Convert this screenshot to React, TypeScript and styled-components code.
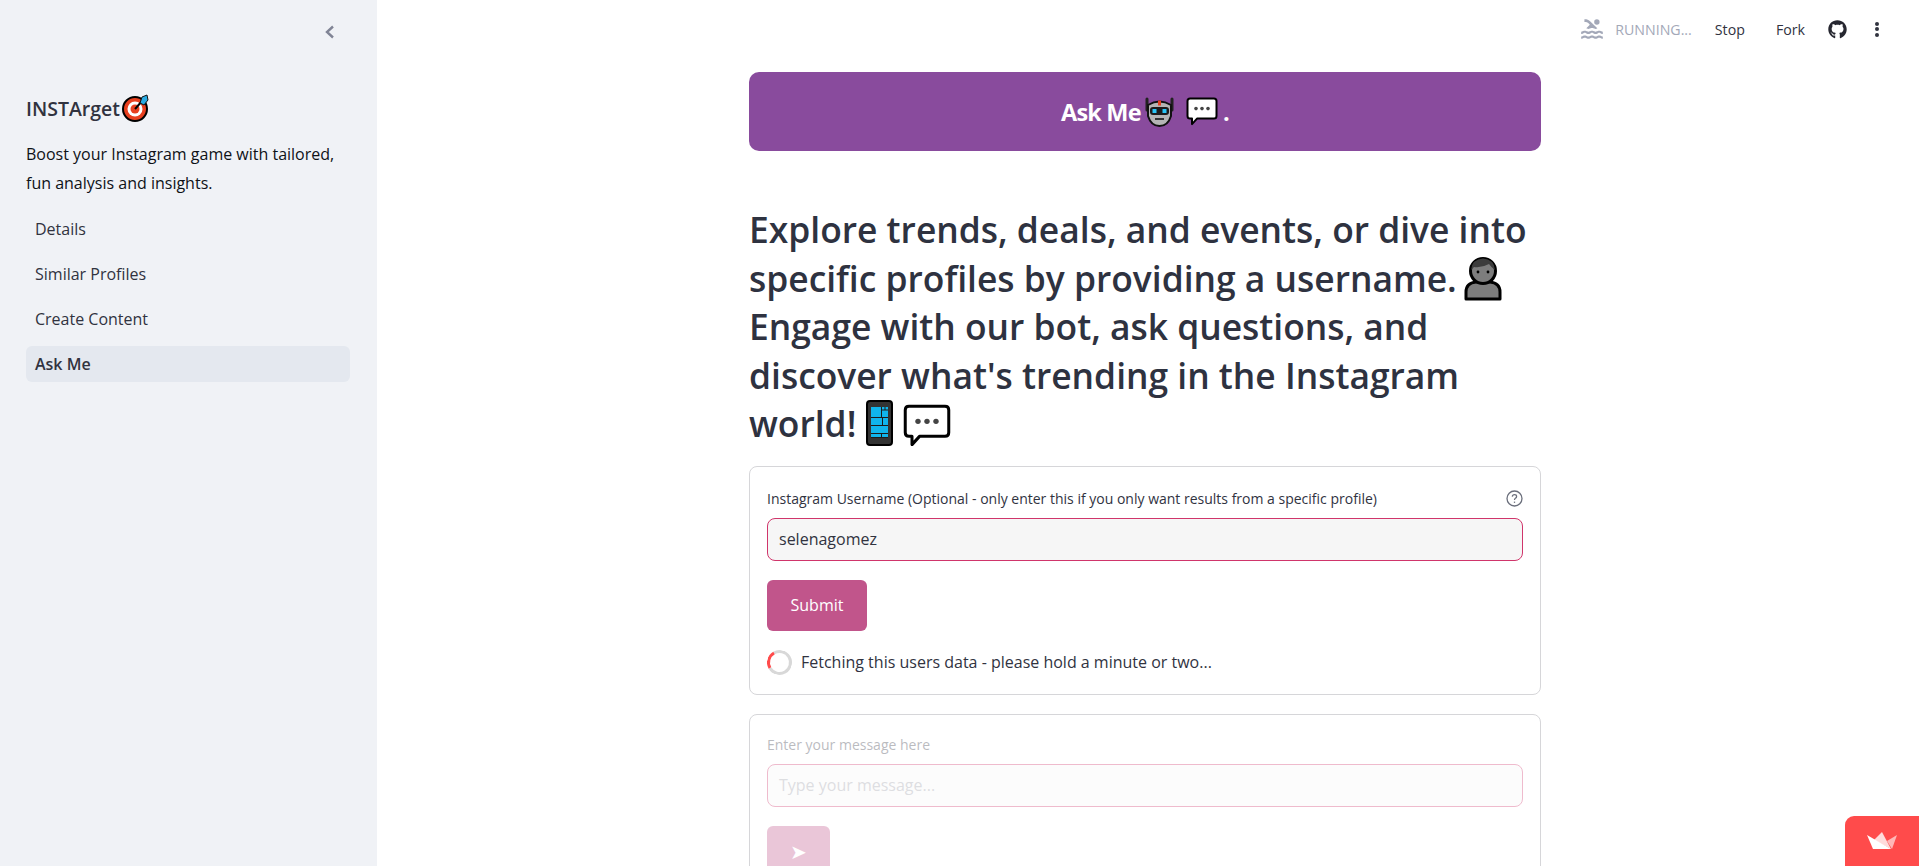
import React from "react";
import styled, { createGlobalStyle } from "styled-components";
import { FaGithub } from "react-icons/fa";
import { MdPool } from "react-icons/md";

const GlobalStyle = createGlobalStyle`
  html, body, #root {
    height: 100%;
    margin: 0;
    overflow: hidden;
  }
  body {
    font-family: "Open Sans", "Noto Sans", sans-serif;
    color: #31333f;
    background: #fff;
  }
  * { box-sizing: border-box; }
`;

const Page = styled.div`
  display: flex;
  height: 866px;
  overflow: hidden;
`;

const Sidebar = styled.aside`
  width: 377px;
  flex: none;
  background: #f0f2f6;
  padding: 0 27px 0 26px;
  display: flex;
  flex-direction: column;
`;

const CollapseRow = styled.div`
  height: 90px;
  padding-top: 22px;
  display: flex;
  justify-content: flex-end;
  padding-right: 13px;
  color: #808495;
`;

const BrandTitle = styled.div`
  display: flex;
  align-items: center;
  height: 36px;
  font-size: 19.5px;
  font-weight: 600;
  color: #31333f;
`;

const Tagline = styled.p`
  margin: 14px 0 13px;
  font-size: 16px;
  line-height: 29px;
  color: #0e1117;
`;

const NavList = styled.nav`
  display: flex;
  flex-direction: column;
  gap: 9px;
`;

const NavItem = styled.div<{ $active?: boolean }>`
  height: 36px;
  padding: 0 9px;
  display: flex;
  align-items: center;
  border-radius: 6px;
  font-size: 16px;
  font-weight: ${(p) => (p.$active ? 600 : 400)};
  background: ${(p) => (p.$active ? "#e4e8ef" : "transparent")};
  color: #31333f;
`;

const Main = styled.main`
  flex: 1;
  min-width: 0;
  display: flex;
  flex-direction: column;
`;

const Toolbar = styled.header`
  height: 60px;
  flex: none;
  display: flex;
  align-items: center;
  justify-content: flex-end;
  padding-bottom: 2px;
  font-size: 14.2px;
  color: #31333f;
`;

const Running = styled.div`
  display: flex;
  align-items: center;
  gap: 10px;
  color: #a3a8b8;
  margin-right: 23px;
`;

const ToolLink = styled.span<{ $gap: number }>`
  margin-right: ${(p) => p.$gap}px;
`;

const GithubLink = styled.span`
  display: flex;
  margin-right: 28px;
  color: #262730;
`;

const Kebab = styled.span`
  display: flex;
  flex-direction: column;
  gap: 1.5px;
  margin-right: 40px;
  i {
    width: 4px;
    height: 4px;
    border-radius: 50%;
    background: #31333f;
  }
`;

const Content = styled.div`
  width: 792px;
  margin: 12px auto 0;
  position: relative;
  left: -3px;
`;

const Banner = styled.div`
  height: 79px;
  background: #894b9d;
  border-radius: 10px;
  display: flex;
  align-items: center;
  justify-content: center;
  font-size: 23.5px;
  font-weight: 700;
  letter-spacing: -0.8px;
  color: #fff;
`;

const Heading = styled.h1`
  margin: 54px 0 18px;
  font-size: 35.4px;
  line-height: 48.5px;
  font-weight: 600;
  color: #2e3240;
  svg {
    vertical-align: -9px;
  }
`;

const FormCard = styled.section`
  border: 1px solid #d6d6d9;
  border-radius: 8px;
  padding: 17px;
  margin-bottom: 19px;
`;

const Stale = styled.div<{ $stale?: boolean }>`
  opacity: ${(p) => (p.$stale ? 0.33 : 1)};
  margin-top: ${(p) => (p.$stale ? -2 : 0)}px;
`;

const LabelRow = styled.div`
  display: flex;
  justify-content: space-between;
  align-items: center;
  height: 34px;
  padding-bottom: 4px;
  font-size: 14px;
  color: #31333f;
`;

const HelpIcon = styled.span`
  display: flex;
  color: #6b6f7c;
`;

const TextBox = styled.div<{ $placeholder?: boolean }>`
  height: 43px;
  display: flex;
  align-items: center;
  padding: 0 11px;
  background: #f6f6f6;
  border: 1px solid #d0356b;
  border-radius: 8px;
  font-size: 16px;
  color: ${(p) => (p.$placeholder ? "#9a9ca6" : "#31333f")};
`;

const SubmitButton = styled.button`
  display: block;
  margin-top: 19px;
  width: 100px;
  height: 51px;
  background: #c1558b;
  border: none;
  border-radius: 6px;
  color: #fff;
  font: inherit;
  font-size: 16px;
`;

const SendButton = styled(SubmitButton)`
  width: 63px;
  display: flex;
  align-items: center;
  justify-content: center;
  font-size: 20px;
  margin-bottom: 20px;
`;

const StatusRow = styled.div`
  display: flex;
  align-items: center;
  gap: 9px;
  margin-top: 19px;
  height: 25px;
  margin-bottom: 2px;
  font-size: 16px;
  color: #31333f;
`;

const Spinner = styled.span`
  width: 25px;
  height: 25px;
  display: block;
  border-radius: 50%;
  border: 3px solid #d8d8d8;
  border-left-color: #ff4b4b;
  transform: rotate(15deg);
`;

const Corner = styled.div`
  position: fixed;
  right: 0;
  bottom: 0;
  width: 74px;
  height: 50px;
  background: #ff4b4b;
  border-top-left-radius: 9px;
  display: flex;
  align-items: center;
  justify-content: center;
`;

const Emoji = styled.svg<{ $gap?: number }>`
  flex: none;
  margin-left: ${(p) => p.$gap ?? 0}px;
`;

function Target() {
  return (
    <Emoji width="27" height="28" viewBox="0 0 27 28" $gap={2}>
      <circle cx="13" cy="15" r="12" fill="#e8401f" stroke="#000" strokeWidth="2" />
      <circle cx="13" cy="15" r="7.5" fill="#fff" />
      <circle cx="13" cy="15" r="4.5" fill="#e8401f" />
      <path d="M13 15 L21 6" stroke="#000" strokeWidth="2" />
      <path d="M18 9 L20 3 L25 1 L26 6 L22 11 Z" fill="#29aae1" stroke="#111" strokeWidth="1" />
    </Emoji>
  );
}

function Robot() {
  return (
    <Emoji width="31" height="31" viewBox="0 0 31 31" $gap={3}>
      <path d="M3 3 V14 M28 3 V14" stroke="#222" strokeWidth="3" strokeLinecap="round" />
      <path d="M4 9 Q15.5 2 27 9 L27 20 Q24 30 15.5 30 Q7 30 4 20 Z" fill="#b5b5b5" stroke="#111" strokeWidth="2" />
      <rect x="14" y="4.5" width="3" height="5" fill="#e8401f" />
      <rect x="6" y="11" width="19" height="8" rx="3" fill="#1c1c1c" />
      <rect x="8.5" y="13" width="4" height="4" fill="#29c5f6" />
      <rect x="18.5" y="13" width="4" height="4" fill="#29c5f6" />
      <rect x="11" y="22" width="9" height="2" fill="#333" />
    </Emoji>
  );
}

function Bubble({ size, gap }: { size: number; gap?: number }) {
  return (
    <Emoji width={size} height={size * 0.88} viewBox="0 0 32 28" $gap={gap}>
      <path
        d="M4 1.5 H28 Q30.5 1.5 30.5 4 V19 Q30.5 21.5 28 21.5 H11 L6 27 V21.5 H4 Q1.5 21.5 1.5 19 V4 Q1.5 1.5 4 1.5 Z"
        fill="#fff"
        stroke="#000"
        strokeWidth="2"
        strokeLinejoin="round"
      />
      <circle cx="10" cy="11.5" r="1.8" fill="#444" />
      <circle cx="16" cy="11.5" r="1.8" fill="#444" />
      <circle cx="22" cy="11.5" r="1.8" fill="#444" />
    </Emoji>
  );
}

function Person() {
  return (
    <Emoji width="38" height="45" viewBox="0 0 38 45" $gap={7}>
      <path d="M2 43 V36 Q2 27 12 26 H26 Q36 27 36 36 V43 Z" fill="#7d7d7d" stroke="#000" strokeWidth="3" strokeLinejoin="round" />
      <circle cx="19" cy="15" r="12.5" fill="#7d7d7d" stroke="#000" strokeWidth="3" />
      <path d="M7 14 Q8 3 19 2.5 Q30 3 31 14 Q27 11 25 8 Q18 12 10 11 Z" fill="#3c3c3c" />
      <circle cx="14" cy="16" r="1.4" fill="#000" />
      <circle cx="24" cy="16" r="1.4" fill="#000" />
    </Emoji>
  );
}

function Phone() {
  return (
    <Emoji width="27" height="46" viewBox="0 0 27 46" $gap={10}>
      <rect x="1" y="1" width="25" height="44" rx="3" fill="#333" stroke="#000" strokeWidth="2" />
      <rect x="5" y="7" width="17" height="31" fill="#1c1c1c" />
      <rect x="5" y="7" width="10" height="10" fill="#10b5ec" />
      <rect x="16" y="7" width="2.5" height="2.5" fill="#10b5ec" />
      <rect x="19.5" y="7" width="2.5" height="2.5" fill="#10b5ec" />
      <rect x="16" y="10.5" width="6" height="6.5" fill="#10b5ec" />
      <rect x="5" y="18" width="11" height="7" fill="#10b5ec" />
      <rect x="17" y="18" width="5" height="7" fill="#10b5ec" />
      <rect x="5" y="26" width="17" height="7" fill="#10b5ec" />
      <rect x="5" y="34" width="10" height="3" fill="#10b5ec" />
      <rect x="16" y="34" width="6" height="3" fill="#10b5ec" />
    </Emoji>
  );
}

function StreamlitMark() {
  return (
    <svg width="30" height="18" viewBox="0 0 30 18">
      <path d="M15 0 L7 8 L24 17 Z" fill="#fff" opacity="0.8" />
      <path d="M30 3 L20 9 L25 17 Z" fill="#fff" opacity="0.6" />
      <path d="M0 3 L24 17 H6 Z" fill="#fff" />
    </svg>
  );
}

export default function App() {
  return (
    <Page>
      <GlobalStyle />
      <Sidebar>
        <CollapseRow>
          <svg width="20" height="20" viewBox="0 0 20 20" fill="none" stroke="currentColor" strokeWidth="2.4">
            <path d="M16 4.5 L10 10 L16 15.5" />
          </svg>
        </CollapseRow>
        <BrandTitle>
          INSTArget
          <Target />
        </BrandTitle>
        <Tagline>
          Boost your Instagram game with tailored,
          <br />
          fun analysis and insights.
        </Tagline>
        <NavList>
          <NavItem>Details</NavItem>
          <NavItem>Similar Profiles</NavItem>
          <NavItem>Create Content</NavItem>
          <NavItem $active>Ask Me</NavItem>
        </NavList>
      </Sidebar>
      <Main>
        <Toolbar>
          <Running>
            <MdPool size={26} />
            RUNNING...
          </Running>
          <ToolLink $gap={31}>Stop</ToolLink>
          <ToolLink $gap={23}>Fork</ToolLink>
          <GithubLink>
            <FaGithub size={19} />
          </GithubLink>
          <Kebab>
            <i />
            <i />
            <i />
          </Kebab>
        </Toolbar>
        <Content>
          <Banner>
            Ask Me
            <Robot />
            <Bubble size={32} gap={11} />
            <span>&nbsp;.</span>
          </Banner>
          <Heading>
            Explore trends, deals, and events, or dive into
            <br />
            specific profiles by providing a username.
            <Person />
            <br />
            Engage with our bot, ask questions, and
            <br />
            discover what's trending in the Instagram
            <br />
            world!
            <Phone />
            <Bubble size={48} gap={10} />
          </Heading>
          <FormCard>
            <LabelRow>
              Instagram Username (Optional - only enter this if you only want results from a specific profile)
              <HelpIcon>
                <svg width="17" height="17" viewBox="0 0 17 17" fill="none" stroke="currentColor" strokeWidth="1.3">
                  <circle cx="8.5" cy="8.5" r="7.5" />
                  <path d="M6.3 6.6 Q6.5 4.6 8.5 4.6 Q10.6 4.6 10.6 6.4 Q10.6 7.6 9.4 8.2 Q8.5 8.7 8.5 10" />
                  <path d="M8.5 11.6 V12.9" />
                </svg>
              </HelpIcon>
            </LabelRow>
            <TextBox>selenagomez</TextBox>
            <SubmitButton>Submit</SubmitButton>
            <StatusRow>
              <Spinner />
              Fetching this users data - please hold a minute or two...
            </StatusRow>
          </FormCard>
          <FormCard>
            <Stale $stale>
              <LabelRow>Enter your message here</LabelRow>
              <TextBox $placeholder>Type your message...</TextBox>
              <SendButton>➤</SendButton>
            </Stale>
          </FormCard>
        </Content>
      </Main>
      <Corner>
        <StreamlitMark />
      </Corner>
    </Page>
  );
}
